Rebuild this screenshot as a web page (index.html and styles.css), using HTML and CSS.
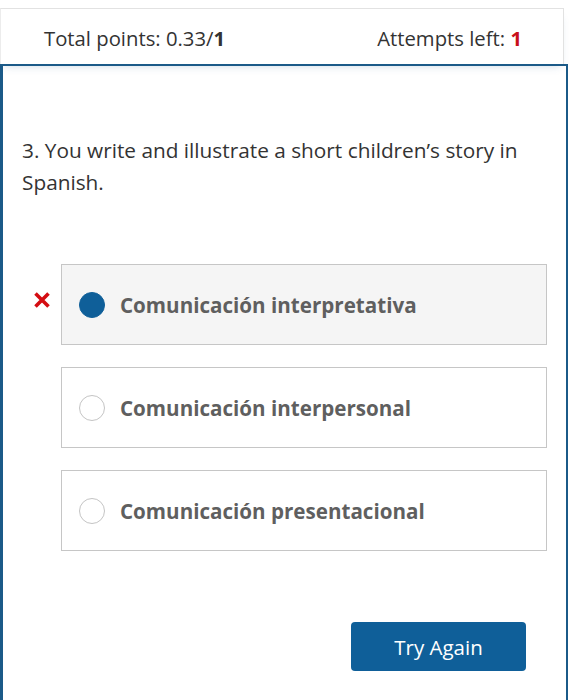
FILE: index.html
```html
<!DOCTYPE html>
<html lang="en">
<head>
<meta charset="utf-8">
<title>Question</title>
<link rel="stylesheet" href="styles.css">
</head>
<body>
<div class="score-card">
  <div class="score-row">
    <span class="score">Total points: 0.33/<b>1</b></span>
    <span class="attempts">Attempts left: <b class="red">1</b></span>
  </div>
</div>
<div class="panel">
  <p class="question">3. You write and illustrate a short children’s story in Spanish.</p>
  <div class="options">
    <div class="option selected">
      <span class="wrong">
        <svg width="18" height="18" viewBox="0 0 18 18"><path d="M2.5 2.5 L15.5 15.5 M15.5 2.5 L2.5 15.5" stroke="#d40d12" stroke-width="3.6" stroke-linecap="butt"/></svg>
      </span>
      <span class="radio"></span>
      <span class="label">Comunicación interpretativa</span>
    </div>
    <div class="option">
      <span class="radio"></span>
      <span class="label">Comunicación interpersonal</span>
    </div>
    <div class="option">
      <span class="radio"></span>
      <span class="label">Comunicación presentacional</span>
    </div>
  </div>
  <div class="actions">
    <button class="btn">Try Again</button>
  </div>
</div>
</body>
</html>
```
FILE: styles.css
```css
* { box-sizing: border-box; }
html, body { margin: 0; padding: 0; background: #fff; }
body {
  font-family: "Open Sans", "Noto Sans", "Liberation Sans", sans-serif;
  color: #333;
  width: 570px;
  height: 700px;
  overflow: hidden;
}
.score-card {
  margin-top: 8px;
  width: 564px;
  height: 56px;
  border-top: 1px solid #e2e2e2;
  border-right: 1px solid #e2e2e2;
  border-left: 1px solid #ececec;
  box-shadow: 0 6px 8px -4px rgba(60, 110, 160, 0.25);
}
.score-row {
  display: flex;
  justify-content: space-between;
  padding: 15px 41px 0 43px;
  font-size: 20.3px;
  line-height: 28px;
  color: #333;
}
.score b { font-weight: 700; }
.red { color: #c8101a; font-weight: 700; }
.panel {
  width: 568px;
  height: 640px;
  border-top: 2px solid #1b5a88;
  border-left: 3px solid #1b5a88;
  border-right: 2px solid #1b5a88;
  padding: 68px 19px 0 19px;
}
.question {
  margin: 0;
  font-size: 20.8px;
  line-height: 32px;
  color: #333;
  padding-right: 10px;
}
.options {
  display: flex;
  flex-direction: column;
  gap: 22px;
  margin: 66px 0 0 39px;
}
.option {
  position: relative;
  height: 81px;
  border: 1px solid #c6c6c6;
  background: #fff;
  display: flex;
  align-items: center;
  padding-left: 17px;
}
.option.selected { background: #f5f5f5; }
.radio {
  width: 26px;
  height: 26px;
  border-radius: 50%;
  border: 1.5px solid #c4c4c4;
  background: #fff;
  flex: none;
}
.selected .radio {
  background: #0f5f99;
  border-color: #0f5f99;
}
.label {
  margin-left: 15px;
  font-size: 20.6px;
  font-weight: 700;
  color: #5f5f5f;
}
.wrong {
  position: absolute;
  left: -29px;
  top: 26px;
  width: 18px;
  height: 18px;
  display: block;
}
.wrong svg { display: block; }
.actions {
  display: flex;
  justify-content: flex-end;
  margin-top: 71px;
  padding-right: 21px;
}
.btn {
  width: 175px;
  height: 49px;
  background: #0f5f99;
  color: #fff;
  border: none;
  border-radius: 4px;
  font-family: "Open Sans", "Noto Sans", sans-serif;
  font-size: 20.5px;
  padding: 0;
}
```
